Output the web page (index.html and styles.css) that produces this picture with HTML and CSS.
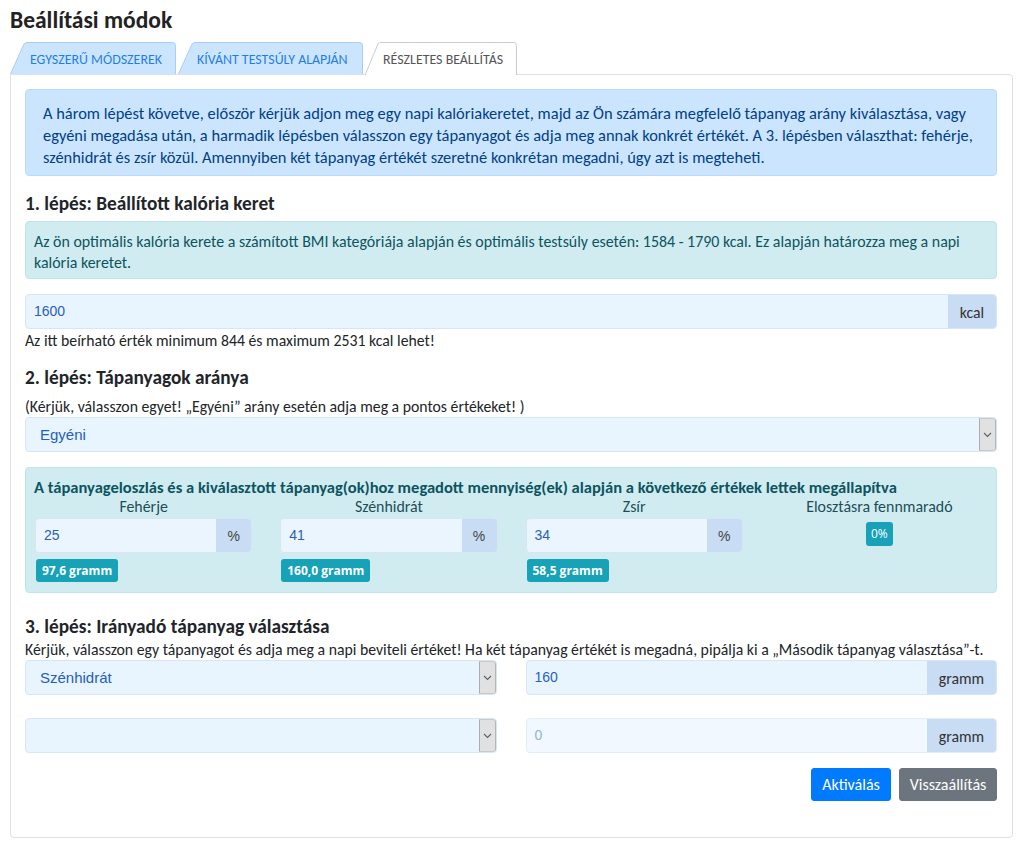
FILE: index.html
```html
<!DOCTYPE html>
<html lang="hu">
<head>
<meta charset="utf-8">
<title>Beállítási módok</title>
<link rel="stylesheet" href="styles.css">
</head>
<body>
<h1 class="title">Beállítási módok</h1>
<div class="tabs">
  <div class="tab tab-1">
    <svg class="tab-bg" width="166" height="32" viewBox="0 0 166 32"><path d="M0.5 32 L14 2 Q15 0.5 17 0.5 L162.5 0.5 Q165.5 0.5 165.5 3.5 L165.5 32" fill="#cce5ff" stroke="#a8cdee"/></svg>
    <span class="tab-label">EGYSZERŰ MÓDSZEREK</span>
  </div>
  <div class="tab tab-2">
    <svg class="tab-bg" width="185" height="32" viewBox="0 0 185 32"><path d="M0.5 32 L14 2 Q15 0.5 17 0.5 L181.5 0.5 Q184.5 0.5 184.5 3.5 L184.5 32" fill="#cce5ff" stroke="#a8cdee"/></svg>
    <span class="tab-label">KÍVÁNT TESTSÚLY ALAPJÁN</span>
  </div>
  <div class="tab tab-3">
    <svg class="tab-bg" width="152" height="33" viewBox="0 0 152 33"><path d="M0.5 33 L0.5 32 L13 2 Q14 0.5 16 0.5 L148.5 0.5 Q151.5 0.5 151.5 3.5 L151.5 33" fill="#ffffff" stroke="#c9cdd2"/></svg>
    <span class="tab-label">RÉSZLETES BEÁLLÍTÁS</span>
  </div>
  <div class="tab-rest"></div>
</div>
<div class="panel">
  <div class="alert alert-primary">A három lépést követve, először kérjük adjon meg egy napi kalóriakeretet, majd az Ön számára megfelelő tápanyag arány kiválasztása, vagy egyéni megadása után, a harmadik lépésben válasszon egy tápanyagot és adja meg annak konkrét értékét. A 3. lépésben választhat: fehérje, szénhidrát és zsír közül. Amennyiben két tápanyag értékét szeretné konkrétan megadni, úgy azt is megteheti.</div>

  <h2 class="step">1. lépés: Beállított kalória keret</h2>
  <div class="alert alert-info">Az ön optimális kalória kerete a számított BMI kategóriája alapján és optimális testsúly esetén: 1584 - 1790 kcal. Ez alapján határozza meg a napi kalória keretet.</div>

  <div class="input-group kcal-group">
    <div class="field">1600</div>
    <div class="addon">kcal</div>
  </div>
  <div class="hint">Az itt beírható érték minimum 844 és maximum 2531 kcal lehet!</div>

  <h2 class="step step-2">2. lépés: Tápanyagok aránya</h2>
  <div class="hint hint-2">(Kérjük, válasszon egyet! „Egyéni” arány esetén adja meg a pontos értékeket! )</div>
  <div class="select">
    <span class="select-value">Egyéni</span>
    <span class="select-btn"><svg width="9" height="6" viewBox="0 0 9 6"><path d="M1 1 L4.5 4.5 L8 1" fill="none" stroke="#606060" stroke-width="1.1"/></svg></span>
  </div>

  <div class="alert alert-info result">
    <div class="result-title">A tápanyageloszlás és a kiválasztott tápanyag(ok)hoz megadott mennyiség(ek) alapján a következő értékek lettek megállapítva</div>
    <div class="result-grid">
      <div class="macro">
        <div class="macro-label">Fehérje</div>
        <div class="input-group">
          <div class="field">25</div>
          <div class="addon addon-pct">%</div>
        </div>
        <span class="badge">97,6 gramm</span>
      </div>
      <div class="macro">
        <div class="macro-label">Szénhidrát</div>
        <div class="input-group">
          <div class="field">41</div>
          <div class="addon addon-pct">%</div>
        </div>
        <span class="badge">160,0 gramm</span>
      </div>
      <div class="macro">
        <div class="macro-label">Zsír</div>
        <div class="input-group">
          <div class="field">34</div>
          <div class="addon addon-pct">%</div>
        </div>
        <span class="badge">58,5 gramm</span>
      </div>
      <div class="macro macro-rest">
        <div class="macro-label">Elosztásra fennmaradó</div>
        <span class="badge badge-light">0%</span>
      </div>
    </div>
  </div>

  <h2 class="step step-3">3. lépés: Irányadó tápanyag választása</h2>
  <div class="hint hint-3">Kérjük, válasszon egy tápanyagot és adja meg a napi beviteli értéket! Ha két tápanyag értékét is megadná, pipálja ki a „Második tápanyag választása”-t.</div>
  <div class="pair-grid">
    <div class="select">
      <span class="select-value">Szénhidrát</span>
      <span class="select-btn"><svg width="9" height="6" viewBox="0 0 9 6"><path d="M1 1 L4.5 4.5 L8 1" fill="none" stroke="#606060" stroke-width="1.1"/></svg></span>
    </div>
    <div class="input-group">
      <div class="field">160</div>
      <div class="addon addon-g">gramm</div>
    </div>
    <div class="select">
      <span class="select-value"></span>
      <span class="select-btn"><svg width="9" height="6" viewBox="0 0 9 6"><path d="M1 1 L4.5 4.5 L8 1" fill="none" stroke="#606060" stroke-width="1.1"/></svg></span>
    </div>
    <div class="input-group disabled">
      <div class="field">0</div>
      <div class="addon addon-g">gramm</div>
    </div>
  </div>
  <div class="actions">
    <button class="btn btn-primary">Aktiválás</button>
    <button class="btn btn-secondary">Visszaállítás</button>
  </div>
</div>
</body>
</html>
```
FILE: styles.css
```css
* { box-sizing: border-box; }
html, body { margin: 0; }
body {
  padding: 7px 11px 10px 10px;
  font-family: Carlito, Lato, "Open Sans", sans-serif;
  font-size: 15.75px;
  color: #212529;
  background: #fff;
}
.title {
  margin: 0;
  font-size: 23.5px;
  font-weight: 700;
  line-height: 27px;
  color: #222;
}
.tabs {
  display: flex;
  align-items: flex-end;
  margin-top: 7px;
  height: 33px;
  gap: 2px;
}
.tab {
  position: relative;
  height: 32px;
  display: flex;
  align-items: center;
  font-size: 13.9px;
  color: #1f7fe6;
}
.tab-bg { position: absolute; left: 0; top: 0; }
.tab-label { position: relative; padding-top: 2px; }
.tab-1 { width: 166px; padding-left: 20px; }
.tab-2 { width: 185px; padding-left: 19px; }
.tab-3 { width: 152px; height: 33px; padding-left: 18px; color: #555; margin-bottom: -1px; z-index: 1; }
.tab-rest { flex: 1; }
.panel {
  border: 1px solid #dee2e6;
  border-radius: 0 4px 4px 4px;
  padding: 14px 15px 36px 14px;
}
.alert {
  border: 1px solid transparent;
  border-radius: 4px;
}
.alert-primary {
  background: #cce5ff;
  border-color: #b8daff;
  color: #004085;
  font-size: 16.45px;
  line-height: 22px;
  padding: 12px 18px 7px 17px;
}
.alert-info {
  background: #d1ecf1;
  border-color: #bee5eb;
  color: #0c5460;
  font-size: 15.9px;
  line-height: 21px;
  padding: 9px 8px 5px;
}
.step {
  margin: 16px 0 5px;
  font-size: 19.3px;
  font-weight: 700;
  line-height: 24px;
  color: #212529;
}
.step-2 { margin-top: 15px; margin-bottom: 7px; }
.step-3 { margin-top: 22px; margin-bottom: 1px; }
.input-group {
  display: flex;
  height: 35px;
  border: 1px solid #d8e6f3;
  border-radius: 4px;
  overflow: hidden;
  background: #e8f4fe;
}
.kcal-group { margin-top: 15px; }
.field {
  flex: 1;
  display: flex;
  align-items: center;
  padding-left: 8px;
  padding-bottom: 1px;
  font-family: "Liberation Sans", Arial, sans-serif;
  font-size: 14px;
  color: #2c5fb8;
}
.addon {
  display: flex;
  align-items: center;
  justify-content: center;
  background: #c8dcf3;
  color: #333;
  width: 48px;
  padding-top: 2px;
}
.addon-pct { width: 35px; font-family: "Liberation Sans", Arial, sans-serif; font-size: 14px; color: #444; }
.addon-g { width: 69px; }
.hint {
  line-height: 20px;
  margin-top: 2px;
}
.hint-2 { margin-top: 0; }
.hint-3 { margin-top: 0; }
.select {
  display: flex;
  height: 35px;
  border: 1px solid #d8e6f3;
  border-radius: 4px;
  background: #e8f4fe;
  overflow: hidden;
}
.select-value {
  flex: 1;
  display: flex;
  align-items: center;
  padding-left: 14px;
  font-family: "Liberation Sans", Arial, sans-serif;
  font-size: 15px;
  color: #1f5fc0;
}
.select-btn {
  width: 17px;
  display: flex;
  align-items: center;
  justify-content: center;
  background: #e1e1e1;
  border-left: 1px solid #adadad;
  border-right: 1px solid #b5b5b5;
  border-top: 1px solid #c9c9c9;
  border-bottom: 1px solid #c9c9c9;
  border-radius: 0 3px 3px 0;
}
.result {
  margin-top: 15px;
  padding: 9px 8px 10px;
}
.result-title {
  font-weight: 700;
  font-size: 16.55px;
  line-height: 20px;
  color: #0c5460;
  white-space: nowrap;
}
.result-grid {
  display: grid;
  grid-template-columns: repeat(4, 1fr);
  column-gap: 28px;
  padding-left: 1px;
}
.macro {
  display: flex;
  flex-direction: column;
  align-items: stretch;
}
.macro-label {
  text-align: center;
  line-height: 20px;
  color: #1d4e57;
  margin-bottom: 1px;
}
.macro .input-group { background: #eaf5fd; }
.badge {
  align-self: flex-start;
  display: block;
  margin-top: 6px;
  margin-left: 1px;
  padding: 0 6px;
  height: 23px;
  line-height: 23px;
  border-radius: 3px;
  background: #17a2b8;
  color: #fff;
  font-family: "Open Sans", sans-serif;
  font-size: 12px;
  font-weight: 700;
}
.macro-rest { align-items: center; }
.badge-light {
  align-self: center;
  font-weight: 400;
  font-size: 12px;
  margin-top: 4px;
  margin-left: 0;
  height: 24px;
  line-height: 24px;
  padding: 0 5px;
}
.pair-grid {
  display: grid;
  grid-template-columns: 1fr 1fr;
  column-gap: 29px;
  row-gap: 23px;
}
.input-group.disabled { background: #f1f8ff; border-color: #e2edf6; }
.input-group.disabled .field { color: #93b2d6; }
.actions {
  display: flex;
  justify-content: flex-end;
  gap: 8px;
  margin-top: 15px;
}
.btn {
  height: 33px;
  border: 1px solid transparent;
  border-radius: 3px;
  font-family: inherit;
  font-size: 16px;
  color: #fff;
  padding: 0 8px;
}
.btn-primary { background: #007bff; border-color: #007bff; width: 80px; }
.btn-secondary { background: #6c757d; border-color: #6c757d; width: 98px; }
```
